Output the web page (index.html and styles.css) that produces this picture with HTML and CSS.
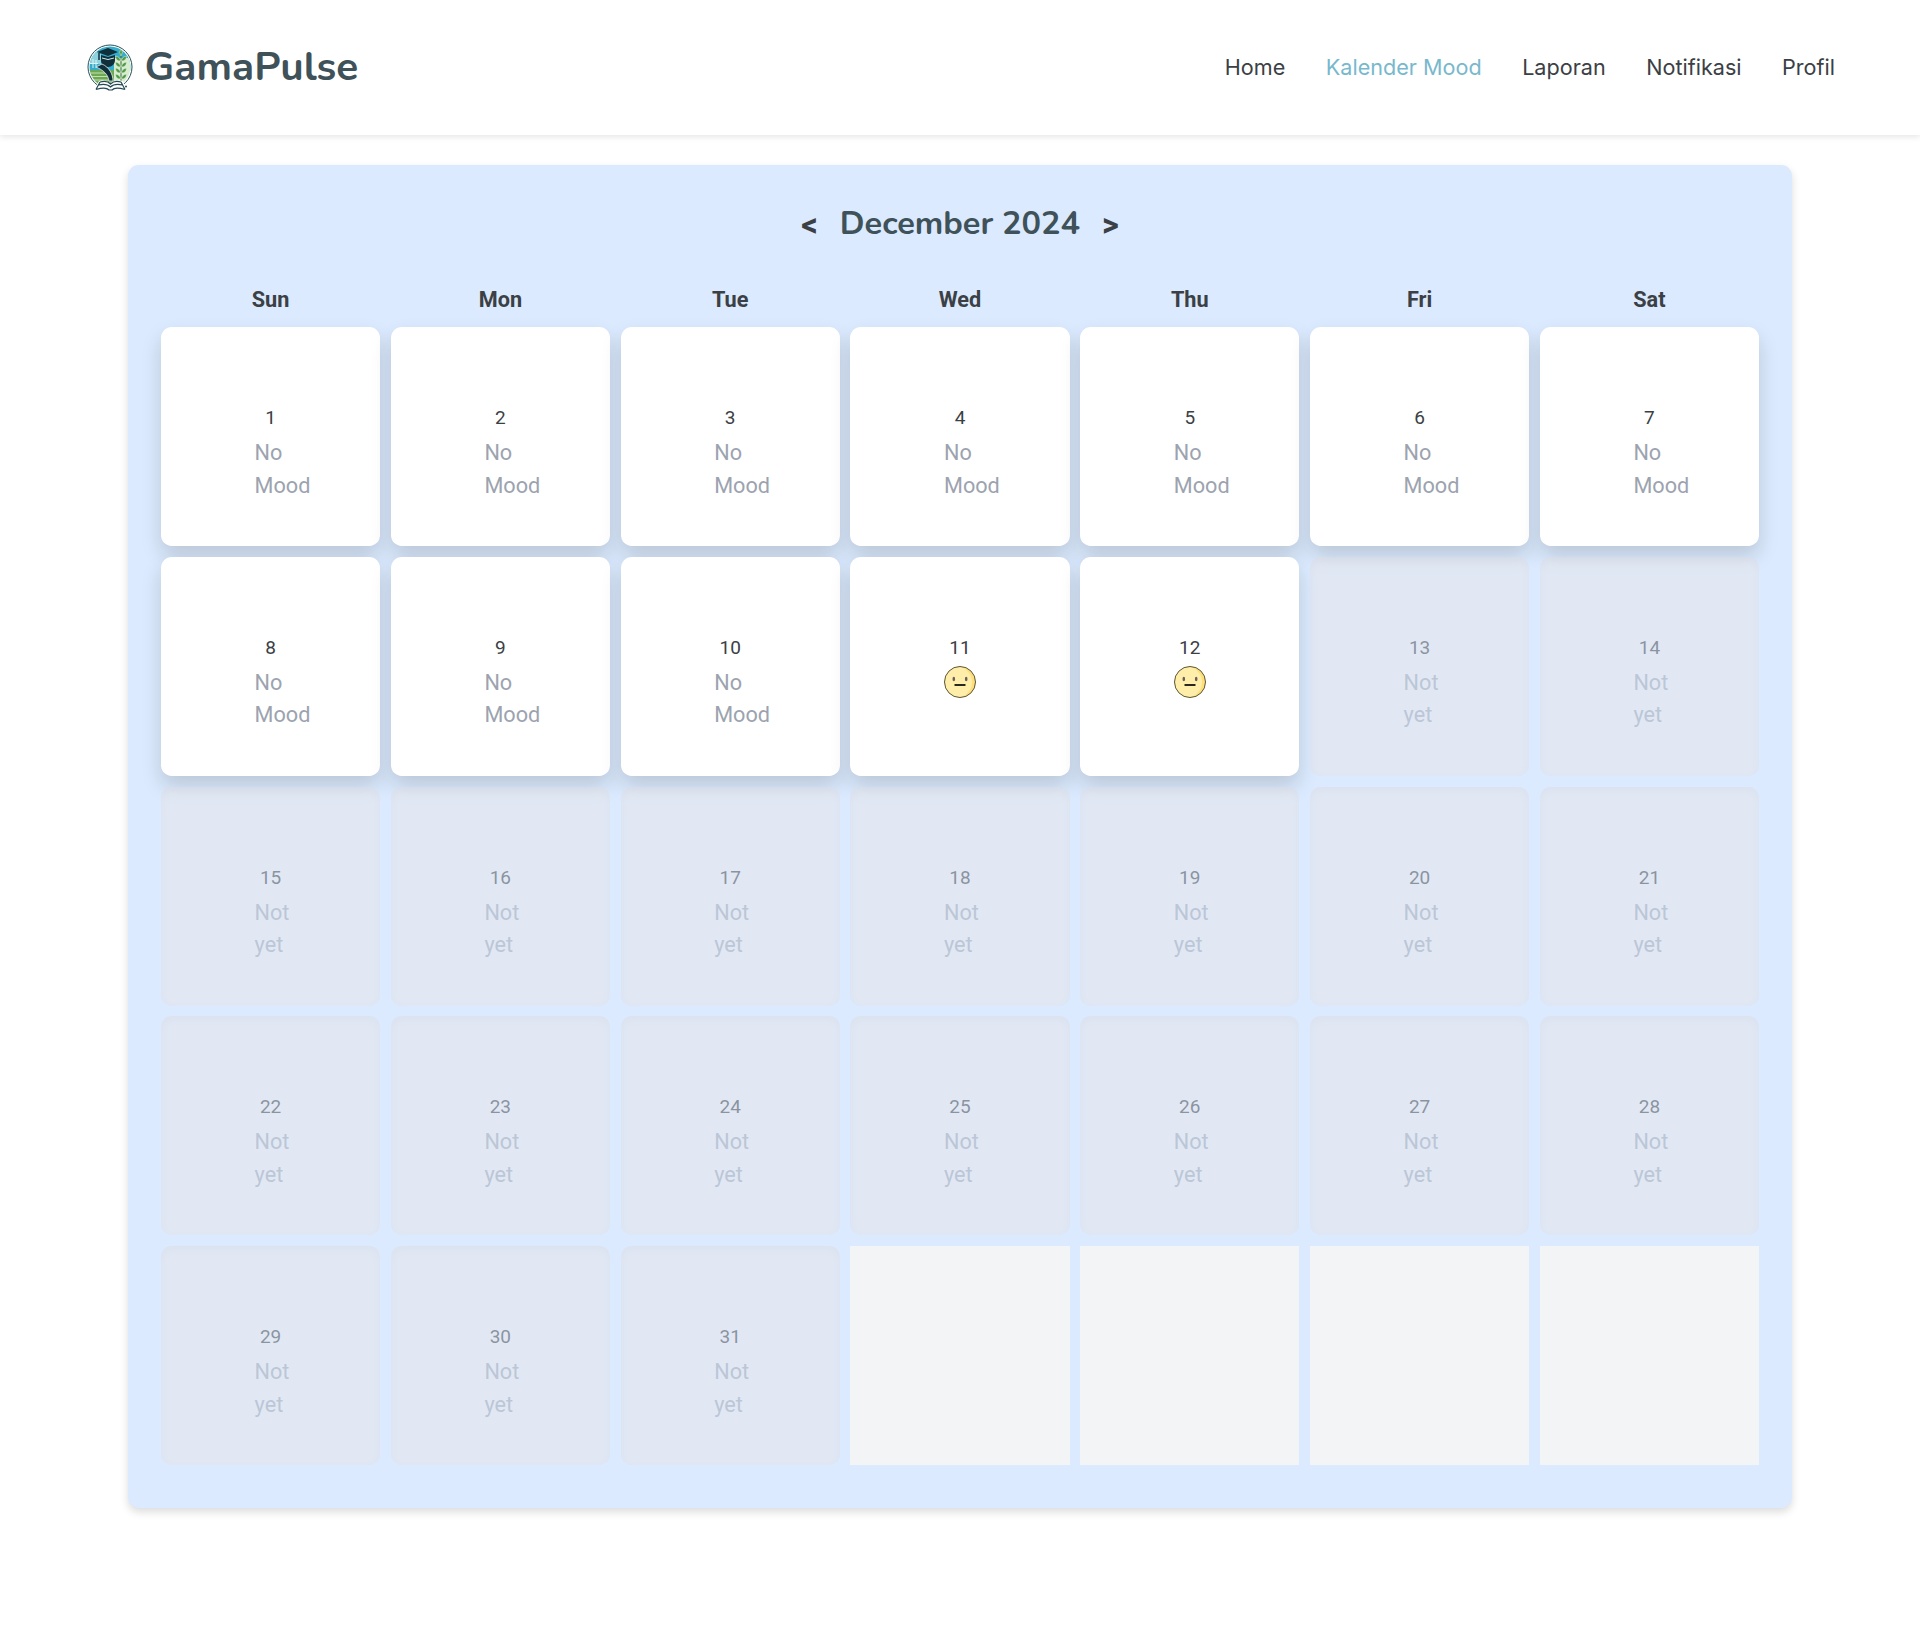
FILE: index.html
```html
<!DOCTYPE html>
<html lang="id">
<head>
<meta charset="utf-8">
<title>GamaPulse - Kalender Mood</title>
<link rel="stylesheet" href="styles.css">
</head>
<body>
<svg class="sprite" aria-hidden="true">
  <symbol id="neutral" viewBox="0 0 32 32">
    <circle cx="16" cy="16" r="15.5" fill="#ffdf7c"/>
    <path d="M16 .5a15.5 15.5 0 0 0 0 31c7-2 12-8 12-15.500S23 3 16 .5z" fill="#ffeeaa"/>
    <circle cx="16" cy="16" r="15.500" fill="none" stroke="#5b5638" stroke-width="1"/>
    <ellipse cx="9.800" cy="13" rx="1.300" ry="2.200" fill="#6b5f5c"/>
    <ellipse cx="22.200" cy="13" rx="1.300" ry="2.200" fill="#6b5f5c"/>
    <path d="M10.500 19h11" stroke="#111" stroke-width="1.800"/>
  </symbol>
</svg>
<header class="header">
  <a class="brand">
    <svg class="logo" viewBox="0 0 46 48">
      <defs><clipPath id="disc"><circle cx="23" cy="23" r="20.500"/></clipPath></defs>
      <circle cx="23" cy="23" r="22" fill="#fff" stroke="#24505a" stroke-width="1"/>
      <g clip-path="url(#disc)">
        <path d="M0 0h46v27H0z" fill="#35acc9"/>
        <path d="M0 12q8-7 14-2v10H0z" fill="#8fd2df"/>
        <path d="M0 26h28v20H0z" fill="#6da857"/>
        <path d="M0 29h20M0 32.500h23M0 36h25" stroke="#c7e1ae" stroke-width="1"/>
        <path d="M27 14h19v32H27z" fill="#d8edcf"/>
        <path d="M6 15v9M3 19.500h8M9 16v8" stroke="#d9f3f6" stroke-width="1"/>
        <path d="M34 10v32" stroke="#386b44" stroke-width="1"/>
        <path d="M33.500 17q-5 0-5-5 5 1 5 5zM33.500 23q-5 0-5-5 5 1 5 5zM33.500 29q-5 0-5-5 5 1 5 5zM33.500 35q-5 0-5-5 5 1 5 5zM34.500 17q0-4 5-5 0 5-5 5zM34.500 23q0-4 5-5 0 5-5 5zM34.500 29q0-4 5-5 0 5-5 5zM34.500 35q0-4 5-5 0 5-5 5zM34 12q-3-4 0-7 3 3 0 7z" fill="#4f9a45" stroke="#e6f4df" stroke-width=".5"/>
      </g>
      <path d="M10 8l11-4 10 4-10 4z" fill="#102f3b"/>
      <path d="M14 11l7 2 7-2v5c0 4-3 7-7 7s-7-3-7-7z" fill="#102f3b"/>
      <path d="M12 9v7" stroke="#102f3b" stroke-width="1.500"/>
      <path d="M15 14q6 3 12 0" fill="none" stroke="#d9edef" stroke-width="1"/>
      <path d="M9 23l6-3c7 3 11 10 11 17h-4c-1-7-6-11-13-14z" fill="#102f3b" stroke="#fff" stroke-width=".7"/>
      <path d="M12 37q7-2 11 2 5-4 13-2l4 9q-10-2-15 0h-3q-5-2-15 0z" fill="#fff"/>
      <path d="M13 38q7-2 10.500 2 4-4 10.500-2M11.500 41q8-2 12 2 4-4 12-2M9 45.500q10-3 13 .5h3q3-3.500 13-.5M13 38l-4 7.500M34 38l4 7.500" fill="none" stroke="#244953" stroke-width="1.200"/>
      <circle cx="39" cy="42.500" r="1" fill="#24505a"/>
    </svg>
    <span class="brand-name">GamaPulse</span>
  </a>
  <nav class="nav">
    <a>Home</a><a class="active">Kalender Mood</a><a>Laporan</a><a>Notifikasi</a><a>Profil</a>
  </nav>
</header>
<main class="calendar">
  <div class="month">
    <button class="arrow">&lt;</button>
    <h1 class="month-name">December 2024</h1>
    <button class="arrow">&gt;</button>
  </div>
  <div class="grid weekdays">
    <div>Sun</div><div>Mon</div><div>Tue</div><div>Wed</div><div>Thu</div><div>Fri</div><div>Sat</div>
  </div>
  <div class="grid days">
    <div class="day"><span class="num">1</span><span class="mood">No Mood</span></div>
    <div class="day"><span class="num">2</span><span class="mood">No Mood</span></div>
    <div class="day"><span class="num">3</span><span class="mood">No Mood</span></div>
    <div class="day"><span class="num">4</span><span class="mood">No Mood</span></div>
    <div class="day"><span class="num">5</span><span class="mood">No Mood</span></div>
    <div class="day"><span class="num">6</span><span class="mood">No Mood</span></div>
    <div class="day"><span class="num">7</span><span class="mood">No Mood</span></div>
    <div class="day"><span class="num">8</span><span class="mood">No Mood</span></div>
    <div class="day"><span class="num">9</span><span class="mood">No Mood</span></div>
    <div class="day"><span class="num">10</span><span class="mood">No Mood</span></div>
    <div class="day"><span class="num">11</span><svg class="mood-icon"><use href="#neutral"/></svg></div>
    <div class="day"><span class="num">12</span><svg class="mood-icon"><use href="#neutral"/></svg></div>
    <div class="day future"><span class="num">13</span><span class="mood">Not yet</span></div>
    <div class="day future"><span class="num">14</span><span class="mood">Not yet</span></div>
    <div class="day future"><span class="num">15</span><span class="mood">Not yet</span></div>
    <div class="day future"><span class="num">16</span><span class="mood">Not yet</span></div>
    <div class="day future"><span class="num">17</span><span class="mood">Not yet</span></div>
    <div class="day future"><span class="num">18</span><span class="mood">Not yet</span></div>
    <div class="day future"><span class="num">19</span><span class="mood">Not yet</span></div>
    <div class="day future"><span class="num">20</span><span class="mood">Not yet</span></div>
    <div class="day future"><span class="num">21</span><span class="mood">Not yet</span></div>
    <div class="day future"><span class="num">22</span><span class="mood">Not yet</span></div>
    <div class="day future"><span class="num">23</span><span class="mood">Not yet</span></div>
    <div class="day future"><span class="num">24</span><span class="mood">Not yet</span></div>
    <div class="day future"><span class="num">25</span><span class="mood">Not yet</span></div>
    <div class="day future"><span class="num">26</span><span class="mood">Not yet</span></div>
    <div class="day future"><span class="num">27</span><span class="mood">Not yet</span></div>
    <div class="day future"><span class="num">28</span><span class="mood">Not yet</span></div>
    <div class="day future"><span class="num">29</span><span class="mood">Not yet</span></div>
    <div class="day future"><span class="num">30</span><span class="mood">Not yet</span></div>
    <div class="day future"><span class="num">31</span><span class="mood">Not yet</span></div>
    <div class="empty"></div><div class="empty"></div><div class="empty"></div><div class="empty"></div>
  </div>
</main>
</body>
</html>
```
FILE: styles.css
```css
* { box-sizing: border-box; }
body {
  margin: 0;
  min-height: 1633px;
  background: #fff;
  color: #3b4045;
  font-family: Roboto, "Liberation Sans", sans-serif;
}
.sprite { display: none; }
.header {
  height: 135px;
  padding: 1px 85px 0 86.500px;
  display: flex;
  align-items: center;
  justify-content: space-between;
  background: #fff;
  box-shadow: 0 2px 6px rgba(0, 0, 0, .1);
}
.brand { display: flex; align-items: center; gap: 12px; }
.logo { width: 46px; height: 48px; }
.brand-name {
  font: 700 40.500px/48px Nunito, "Noto Sans", sans-serif;
  color: #3f5159;
  padding-bottom: 2px;
}
.nav {
  display: flex;
  gap: 40.500px;
  padding-bottom: 2px;
  font: 400 21.600px/32px Inter, sans-serif;
}
.nav .active { color: #78b8cd; }
.calendar {
  width: 1664px;
  height: 1343px;
  margin: 30px auto 0;
  padding: 37px 33px 0;
  background: #dbeafe;
  border-radius: 10.670px;
  box-shadow: 0 4px 8px rgba(0, 0, 0, .14);
}
.month {
  height: 43px;
  display: flex;
  justify-content: center;
  align-items: center;
  gap: 22px;
}
.month-name {
  margin: 0;
  font: 700 32.500px/43px Nunito, "Noto Sans", sans-serif;
  color: #3f5159;
}
.arrow {
  padding: 3px 0 0;
  border: 0;
  background: none;
  color: #3b4045;
  font: 700 32.500px/40px Roboto, sans-serif;
}
.grid {
  display: grid;
  grid-template-columns: repeat(7, 1fr);
  column-gap: 10.670px;
}
.weekdays {
  margin-top: 39px;
  height: 43px;
  text-align: center;
  font-weight: 700;
  font-size: 21.670px;
  line-height: 32px;
}
.days { grid-auto-rows: 219.100px; row-gap: 10.670px; }
.day {
  padding-top: 77px;
  display: flex;
  flex-direction: column;
  align-items: center;
  gap: 5px;
  background: #fff;
  border-radius: 10.670px;
  box-shadow: 0 10px 20px rgba(0, 0, 0, .15);
}
.num { font-size: 19px; line-height: 27px; }
.mood {
  width: 32px;
  padding-top: 1px;
  font-size: 21.670px;
  line-height: 32.500px;
  color: #9ca3af;
}
.mood-icon { width: 32px; height: 32px; }
.future {
  background: #e7e7ec;
  opacity: .5;
  box-shadow: inset 0 3px 8px rgba(0, 0, 0, .05);
}
.empty { background: #f3f4f6; }
```
